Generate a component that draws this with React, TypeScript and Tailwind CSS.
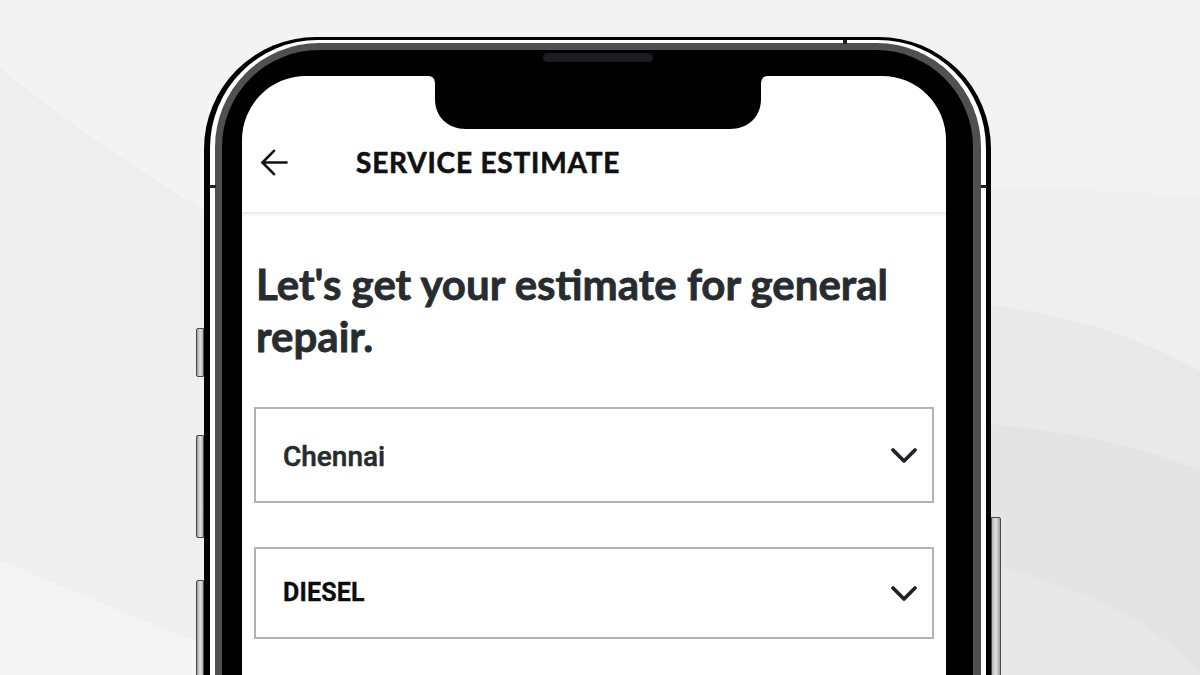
import React from 'react'

// Service estimate screen shown inside a phone mockup on a soft grey backdrop.

function Backdrop() {
  return (
    <svg className="absolute inset-0" width="1200" height="675" viewBox="0 0 1200 675">
      <rect width="1200" height="675" fill="#efefef" />
      {/* left swooshes */}
      <path d="M0 0 H600 V400 C400 330 160 200 0 68 Z" fill="#f3f3f3" />
      <path d="M0 68 C160 200 400 330 600 400 V480 C400 420 160 310 0 200 Z" fill="#eeeeee" />
      <path d="M0 560 C70 590 140 620 220 650 V675 H0 Z" fill="#f4f4f4" />
      {/* right swooshes */}
      <path d="M600 0 H1200 V198 C1120 190 1040 186 600 186 Z" fill="#f2f2f2" />
      <path d="M600 186 C1040 186 1120 190 1200 198 V371 C1120 330 1050 290 600 276 Z" fill="#efefef" />
      <path d="M600 276 C1050 290 1120 330 1200 371 V470 C1120 440 1050 415 600 403 Z" fill="#e9e9e9" />
      <path d="M600 403 C1050 415 1120 440 1200 470 V675 C1150 620 1090 560 600 487 Z" fill="#e4e4e4" />
      <path d="M600 487 C1090 560 1150 620 1200 675 H600 Z" fill="#e8e8e8" />
    </svg>
  )
}

function BackArrow() {
  return (
    <svg width="28" height="27" viewBox="0 0 28 27" fill="none" stroke="#111" strokeWidth="2.6" strokeLinecap="round" strokeLinejoin="round">
      <line x1="2.5" y1="13.5" x2="26.5" y2="13.5" />
      <polyline points="14,1.8 2.5,13.5 14,25.2" />
    </svg>
  )
}

function Chevron() {
  return (
    <svg width="28" height="17" viewBox="0 0 28 17" fill="none" stroke="#1f2327" strokeWidth="3.8" strokeLinecap="round" strokeLinejoin="round">
      <polyline points="3,3 14,14 25,3" />
    </svg>
  )
}

function Notch() {
  return (
    <svg className="absolute left-[186px] top-0" width="340" height="54" viewBox="0 0 340 54">
      <path
        d="M0 0 H340 C335 0 333 3 333 8 V23 C333 41 320 53 302 53 H38 C20 53 7 41 7 23 V8 C7 3 5 0 0 0 Z"
        fill="#000"
      />
    </svg>
  )
}

function Select({ label, upper, h }: { label: string; upper?: boolean; h: string }) {
  return (
    <div className={`flex items-center justify-between border-2 border-[#b3b3b3] pl-[27px] pr-[14px] ${h}`}>
      <span
        className={
          upper
            ? 'text-[25px] font-bold text-[#0d0d0d] tracking-[0.2px] [-webkit-text-stroke:0.3px_#0d0d0d]'
            : 'mt-[3px] text-[28px] font-medium text-[#262b2f] [-webkit-text-stroke:0.5px_#262b2f]'
        }
        style={{ fontFamily: 'Roboto, "Liberation Sans", sans-serif' }}
      >
        {label}
      </span>
      <Chevron />
    </div>
  )
}

function SideButton({ cls }: { cls: string }) {
  return (
    <div className={`absolute w-[8px] rounded-l-[2px] border border-[#4a4a4a] bg-gradient-to-r from-[#9a9a9a] via-[#e2e2e2] to-[#b5b5b5] ${cls}`} />
  )
}

export default function App() {
  return (
    <div className="relative w-[1200px] h-[675px] overflow-hidden bg-[#efefef]">
      <Backdrop />

      <div className="relative pt-[37px] pl-[204px]">
        <div className="relative w-[787px]">
          {/* side buttons */}
          <SideButton cls="left-[-8px] top-[291px] h-[49px]" />
          <SideButton cls="left-[-8px] top-[398px] h-[103px]" />
          <SideButton cls="left-[-8px] top-[543px] h-[140px]" />
          <div className="absolute right-[-10px] top-[480px] h-[180px] w-[10px] rounded-r-[2px] border border-[#4a4a4a] bg-gradient-to-l from-[#9a9a9a] via-[#e2e2e2] to-[#b5b5b5]" />

          {/* antenna breaks */}
          <div className="absolute left-[6px] top-[148px] z-10 h-[3px] w-[6px] bg-[#222]" />
          <div className="absolute right-[4px] top-[148px] z-10 h-[3px] w-[6px] bg-[#222]" />
          <div className="absolute left-[639px] top-[3px] z-10 h-[4px] w-[4px] bg-[#222]" />

          <div className="rounded-t-[112px] bg-black pt-[3px] pl-[6px] pr-[5px]">
            <div className="rounded-t-[108px] bg-white pt-[3px] pl-[5px] pr-[5px]">
              <div className="rounded-t-[104px] bg-[#505050] pt-[7px] pl-[7px] pr-[8px]">
                <div className="relative rounded-t-[97px] bg-black pt-[26px] pl-[20px] pr-[27px]">
                  {/* speaker */}
                  <div className="absolute left-[321px] top-[3px] h-[9px] w-[110px] rounded-full bg-[#1c1c1e]" />

                  <div
                    className="relative h-[620px] overflow-hidden rounded-t-[64px] bg-white"
                    style={{ fontFamily: 'Lato, "Open Sans", sans-serif' }}
                  >
                    <Notch />

                    <div className="flex h-[137px] items-center pt-[36px] pl-[18px] shadow-[0_2px_3px_rgba(0,0,0,0.07)] border-b border-[#ececec]">
                      <BackArrow />
                      <div className="ml-[68px] text-[28px] font-bold tracking-[0.8px] text-[#111] [-webkit-text-stroke:0.6px_#111]">
                        SERVICE ESTIMATE
                      </div>
                    </div>

                    <div className="px-[12px]">
                      <h1 className="mt-[45px] pl-[2px] pr-[20px] text-[42px] font-bold leading-[52px] text-[#272c30] [-webkit-text-stroke:0.8px_#272c30]">
                        Let's get your estimate for general repair.
                      </h1>

                      <div className="mt-[45px] flex flex-col gap-[44px]">
                        <Select label="Chennai" h="h-[96px]" />
                        <Select label="DIESEL" upper h="h-[92px]" />
                      </div>
                    </div>
                  </div>
                </div>
              </div>
            </div>
          </div>
        </div>
      </div>
    </div>
  )
}
